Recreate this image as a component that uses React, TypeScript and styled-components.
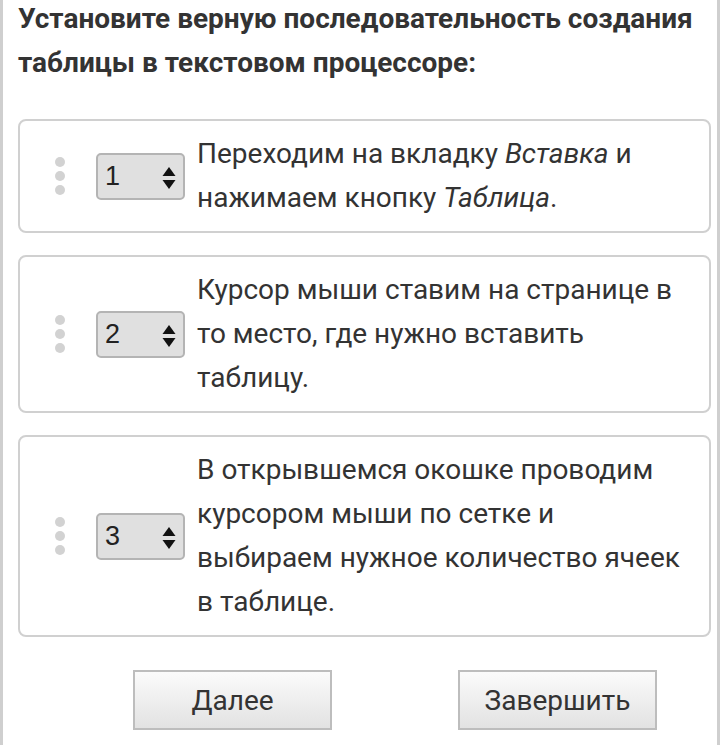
import React, { useState } from 'react';
import styled, { createGlobalStyle } from 'styled-components';

const GlobalStyle = createGlobalStyle`
    html, body {
        margin: 0;
        padding: 0;
        background: #fff;
    }
`;

const Page = styled.div`
    box-sizing: border-box;
    width: 720px;
    min-height: 748px;
    border-left: 3px solid #cfcfcf;
    border-right: 3px solid #cfcfcf;
    padding: 0 6px 0 15px;
    font-family: Roboto, "Liberation Sans", sans-serif;
    color: #333;
`;

const Question = styled.h2`
    margin: -3px 0 0;
    font-size: 28px;
    font-weight: 700;
    line-height: 44px;
    color: #333;
`;

const List = styled.div`
    display: flex;
    flex-direction: column;
    gap: 22px;
    margin-top: 34px;
`;

const Card = styled.div`
    display: flex;
    align-items: center;
    border: 2px solid #d0d0d0;
    border-radius: 8px;
    padding: 11px 16px 11px 0;
`;

const Handle = styled.div`
    display: flex;
    flex-direction: column;
    gap: 4px;
    width: 10px;
    margin-left: 35px;
    margin-right: 31px;
`;

const Dot = styled.span`
    width: 10px;
    height: 10px;
    border-radius: 50%;
    background: #d2d2d2;
`;

const SelectBox = styled.div`
    position: relative;
    box-sizing: border-box;
    flex: 0 0 auto;
    width: 89px;
    height: 47px;
    background: #e0e0e0;
    border: 2px solid #b4b4b4;
    border-radius: 5px;
    margin-right: 12px;
`;

const Select = styled.select`
    appearance: none;
    width: 100%;
    height: 100%;
    border: none;
    background: transparent;
    font-family: "Liberation Sans", Arial, sans-serif;
    font-size: 27px;
    color: #222;
    padding: 0 0 0 7px;
    outline: none;
`;

const Arrows = styled.svg`
    position: absolute;
    right: 7px;
    top: 11px;
    pointer-events: none;
`;

const Text = styled.div`
    font-size: 28px;
    line-height: 44px;
    color: #333;

    em {
        font-style: italic;
    }
`;

const Buttons = styled.div`
    display: flex;
    gap: 126px;
    padding-left: 115px;
    margin-top: 33px;
`;

const Button = styled.button`
    box-sizing: border-box;
    width: 199px;
    height: 60px;
    border: 2px solid #bdbdbd;
    background: linear-gradient(#fbfbfb, #e2e2e2);
    font-family: Roboto, "Liberation Sans", sans-serif;
    font-size: 28px;
    color: #333;
    cursor: pointer;
`;

interface Step {
    id: number;
    content: React.ReactNode;
}

const steps: Step[] = [
    {
        id: 1,
        content: (
            <>
                Переходим на вкладку <em>Вставка</em> и
                <br />
                нажимаем кнопку <em>Таблица</em>.
            </>
        ),
    },
    {
        id: 2,
        content: (
            <>
                Курсор мыши ставим на странице в
                <br />
                то место, где нужно вставить
                <br />
                таблицу.
            </>
        ),
    },
    {
        id: 3,
        content: (
            <>
                В открывшемся окошке проводим
                <br />
                курсором мыши по сетке и
                <br />
                выбираем нужное количество ячеек
                <br />
                в таблице.
            </>
        ),
    },
];

const App = () => {
    const [order, setOrder] = useState<number[]>([1, 2, 3]);

    return (
        <Page>
            <GlobalStyle />
            <Question>
                Установите верную последовательность создания таблицы в текстовом процессоре:
            </Question>
            <List>
                {steps.map((step, i) => (
                    <Card key={step.id}>
                        <Handle>
                            <Dot />
                            <Dot />
                            <Dot />
                        </Handle>
                        <SelectBox>
                            <Select
                                value={order[i]}
                                onChange={(e) => {
                                    const next = [...order];
                                    next[i] = Number(e.target.value);
                                    setOrder(next);
                                }}
                            >
                                <option value={1}>1</option>
                                <option value={2}>2</option>
                                <option value={3}>3</option>
                            </Select>
                            <Arrows width="14" height="24" viewBox="0 0 14 24">
                                <path d="M7 1 L13.5 10 H0.5 Z" fill="#111" />
                                <path d="M7 23 L13.5 14 H0.5 Z" fill="#111" />
                            </Arrows>
                        </SelectBox>
                        <Text>{step.content}</Text>
                    </Card>
                ))}
            </List>
            <Buttons>
                <Button>Далее</Button>
                <Button>Завершить</Button>
            </Buttons>
        </Page>
    );
};

export default App;
